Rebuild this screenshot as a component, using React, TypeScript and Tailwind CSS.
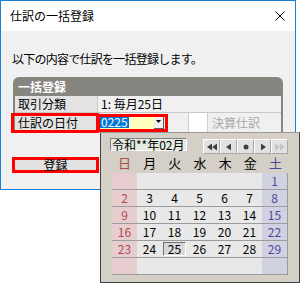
import React from "react";

const days: (number | null)[][] = [
  [null, null, null, null, null, null, 1],
  [2, 3, 4, 5, 6, 7, 8],
  [9, 10, 11, 12, 13, 14, 15],
  [16, 17, 18, 19, 20, 21, 22],
  [23, 24, 25, 26, 27, 28, 29],
  [null, null, null, null, null, null, null],
];

const heads = ["日", "月", "火", "水", "木", "金", "土"];

function NavBtn({ children }: { children: React.ReactNode }) {
  return (
    <div className="w-[17px] h-[15px] bg-[#e2e2e2] border-t border-l border-t-white border-l-white border-b border-r border-b-[#a8a8a8] border-r-[#a8a8a8] flex items-center justify-center">
      {children}
    </div>
  );
}

export default function App() {
  return (
    <div className="relative w-[301px] h-[284px] bg-white overflow-hidden font-['Noto_Sans_CJK_JP',sans-serif] text-black">
      {/* Dialog */}
      <div className="w-[296px] h-[190px] border border-[#1a7fd6] flex flex-col">
        <div className="h-[30px] bg-white flex items-center justify-between pl-[9px] pr-[10px]">
          <span className="text-[12px] leading-[16px]">仕訳の一括登録</span>
          <svg width="10" height="10" viewBox="0 0 10 10">
            <path d="M0.5 0.5 L9.5 9.5 M9.5 0.5 L0.5 9.5" stroke="#000" strokeWidth="1" />
          </svg>
        </div>
        <div className="flex-1 bg-[#f0f0f0] pt-[19px]">
          <div className="pl-[11px] text-[12px] leading-[17px] tracking-[-0.75px]">
            以下の内容で仕訳を一括登録します。
          </div>
          {/* group box */}
          <div className="mt-[10px] ml-[12px] w-[270px]">
            <div className="h-[19px] bg-[#878580] rounded-t-[6px] pl-[5px] text-white font-bold text-[12px] leading-[19px]">
              一括登録
            </div>
            <div className="border-x-2 border-[#878580]">
              <div className="flex h-[17px] border-b border-[#c8c8c8]">
                <div className="w-[83px] bg-[#e3e3e3] border-r border-[#c8c8c8] pl-[3px] text-[12px] leading-[16px]">
                  取引分類
                </div>
                <div className="flex-1 bg-[#f0f0f0] pl-[3px] text-[12px] leading-[16px]">
                  1: 毎月25日
                </div>
              </div>
              <div className="flex h-[20px]">
                <div className="w-[83px] bg-[#e3e3e3] border-r border-[#c8c8c8] pl-[3px] text-[12px] leading-[19px]">
                  仕訳の日付
                </div>
                <div className="w-[68px] flex items-start pt-[1px] pl-[1px]">
                  <div className="w-[55px] h-[15px] bg-[#ffffc0] flex items-center pl-[1px]">
                    <span className="bg-[#0078d7] text-white text-[12px] leading-[13px] px-[1px]">0225</span>
                  </div>
                  <div className="w-[10px] h-[15px] bg-[#f0f0f0] border-r border-b border-[#606060] flex items-center justify-center">
                    <svg width="5" height="3" viewBox="0 0 5 3">
                      <path d="M0 0 L5 0 L2.5 3 Z" fill="#000" />
                    </svg>
                  </div>
                </div>
                <div className="w-[22px] bg-[#f0f0f0]" />
                <div className="w-[20px] bg-white border-x border-[#d0d0d0]" />
                <div className="flex-1 bg-[#f0f0f0] pl-[4px] text-[12px] leading-[19px] text-[#a8a8a8]">
                  決算仕訳
                </div>
              </div>
            </div>
          </div>
          <div className="mt-[24px] ml-[11px] w-[87px] h-[16px] border-[3px] border-[#ff0000] bg-[#e1e1e1] flex items-center justify-center text-[12px] leading-[10px]">
            登録
          </div>
        </div>
      </div>

      {/* annotation boxes */}
      <div className="absolute left-[11px] top-[113px] w-[88px] h-[20px] border-[3px] border-[#ff0000]" />
      <div className="absolute left-[97px] top-[114px] w-[71px] h-[18px] border-[3px] border-[#ff0000]" />

      {/* Calendar popup */}
      <div className="absolute left-[100px] top-[132px] w-[200px] h-[151px] bg-[#d4d0c8] border border-[#404040] border-t-[#9a9a9a]">
        <div className="flex items-start pt-[5px] pl-[9px]">
          <div className="w-[77px] h-[13px] bg-[#e2eae2] border-t border-l border-[#808080] border-b-white border-r-white border-b border-r text-[12px] leading-[12px] pl-[1px] whitespace-nowrap">
            令和**年02月
          </div>
          <div className="ml-[16px] mt-[1px] flex">
            <NavBtn>
              <svg width="10" height="8" viewBox="0 0 10 8">
                <path d="M0 4 L5 0.5 L5 7.5 Z M5 4 L10 0.5 L10 7.5 Z" fill="#404040" />
              </svg>
            </NavBtn>
            <NavBtn>
              <svg width="6" height="8" viewBox="0 0 6 8">
                <path d="M0 4 L5 0.5 L5 7.5 Z" fill="#404040" />
              </svg>
            </NavBtn>
            <NavBtn>
              <svg width="6" height="6" viewBox="0 0 6 6">
                <circle cx="3" cy="3" r="2.5" fill="#404040" />
              </svg>
            </NavBtn>
            <NavBtn>
              <svg width="6" height="8" viewBox="0 0 6 8">
                <path d="M1 0.5 L6 4 L1 7.5 Z" fill="#404040" />
              </svg>
            </NavBtn>
            <NavBtn>
              <svg width="10" height="8" viewBox="0 0 10 8">
                <path d="M0 0.5 L5 4 L0 7.5 Z M5 0.5 L10 4 L5 7.5 Z" fill="#c4c4c4" />
              </svg>
            </NavBtn>
          </div>
        </div>
        <div className="ml-[11px] mt-[1px] w-[176px] grid grid-cols-7 h-[16px] text-[13px] leading-[16px] text-center">
          {heads.map((h, i) => (
            <div
              key={h}
              className={i === 0 ? "text-[#b04848]" : i === 6 ? "text-[#4a4a9a]" : "text-black"}
            >
              {h}
            </div>
          ))}
        </div>
        <div className="ml-[11px] mt-[2px] w-[176px] flex flex-col">
          {days.map((row, r) => (
            <div
              key={r}
              className="grid grid-cols-7 h-[17px] border-b border-r border-[#9c9c9c] border-r-[#9c9c9c]"
            >
              {row.map((d, c) => {
                const bg =
                  c === 0 ? "bg-[#e8cdd0]" : c === 6 ? "bg-[#d0d2e2]" : "bg-[#e8e8e8]";
                const color =
                  c === 0 ? "text-[#b04848]" : c === 6 ? "text-[#4a4a9a]" : "text-black";
                return (
                  <div
                    key={c}
                    className={`${bg} ${color} flex items-center justify-center text-[12px] leading-[14px]`}
                  >
                    {d === 25 ? (
                      <div className="w-[23px] h-[14px] bg-[#d8d8d8] border-t border-l border-[#707070] border-b border-r border-b-white border-r-white flex items-center justify-center">
                        25
                      </div>
                    ) : (
                      d ?? ""
                    )}
                  </div>
                );
              })}
            </div>
          ))}
        </div>
      </div>
    </div>
  );
}
